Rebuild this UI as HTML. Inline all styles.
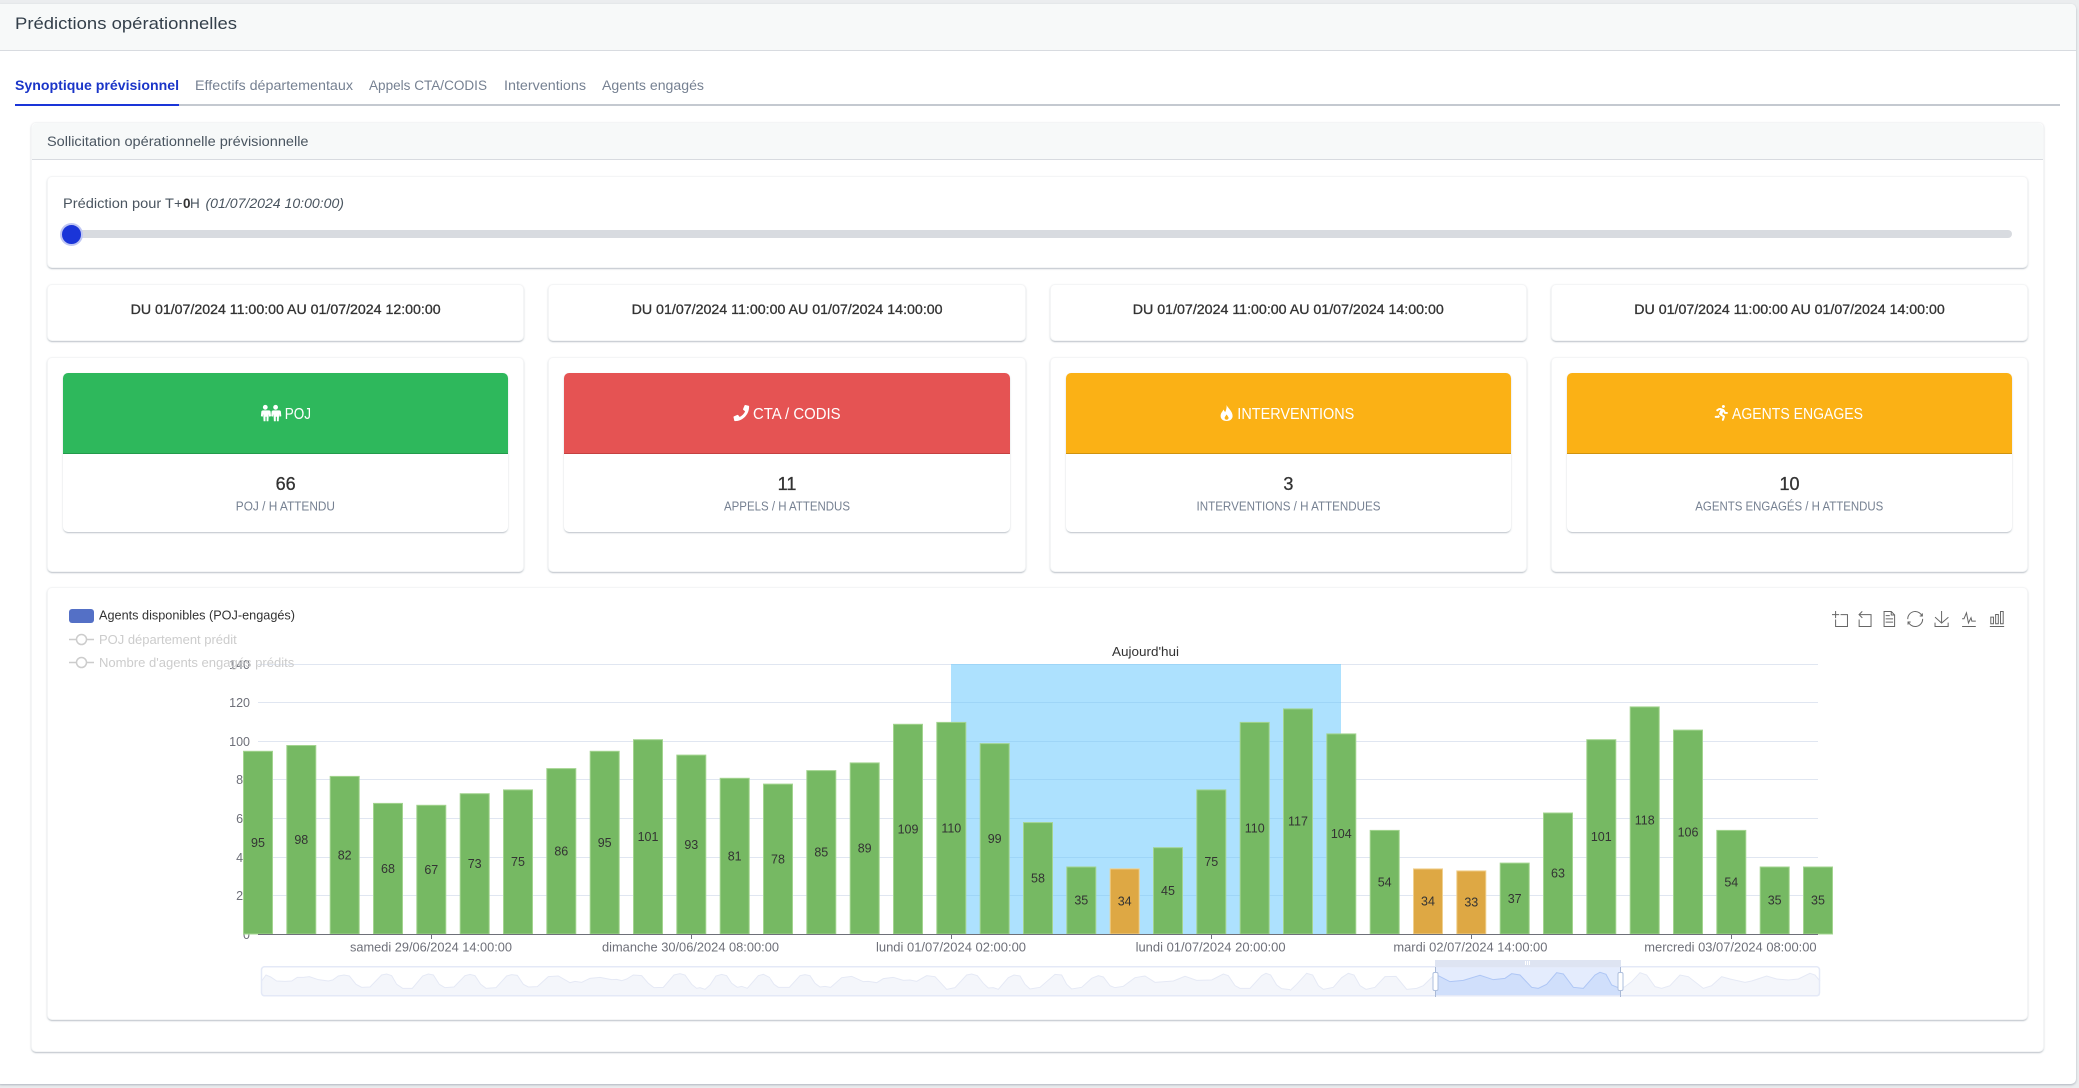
<!DOCTYPE html>
<html lang="fr">
<head>
<meta charset="utf-8">
<title>Prédictions opérationnelles</title>
<style>
html,body{margin:0;padding:0;background:#ebedef;width:2079px;height:1088px;overflow:hidden}
.b{position:absolute;box-sizing:border-box}
.c{background:#fff;border:1px solid #f4f5f6;border-radius:5px;box-shadow:0 1px 1px 0 rgba(60,75,100,.12),0 2px 1px -1px rgba(60,75,100,.1),0 1px 2px 0 rgba(60,75,100,.14)}
svg{position:absolute;left:0;top:0}
text{font-family:"Liberation Sans",sans-serif}
.m{stroke:currentColor;stroke-width:.3}
.ax{font-size:12.5px;fill:#6e7079}
.v{font-size:12.5px;fill:#333;text-anchor:middle}
.g{stroke:#e0e6f1;stroke-width:1}
.gb rect{fill:#76b963;stroke:#a3d48f;stroke-width:1}
.gb rect.o{fill:#dea844;stroke:#f0d08f}
.t path{fill:none;stroke:#666;stroke-width:1;vector-effect:non-scaling-stroke}
.sl{fill:none;stroke:#e5e9f5;stroke-width:1;vector-effect:non-scaling-stroke}
</style>
</head>
<body>
<div class="b" style="left:-4px;top:4px;width:2080px;height:1080px;background:#fff;border-radius:5px;box-shadow:0 1px 2px rgba(60,75,100,.35)"></div>
<div class="b" style="left:-4px;top:4px;width:2080px;height:47px;background:#f7f9f9;border-bottom:1px solid #d8dbe0;border-radius:5px 5px 0 0"></div>
<div class="b" style="left:15px;top:104px;width:2045px;height:2px;background:#c4c9d0"></div>
<div class="b" style="left:15px;top:104px;width:164px;height:2px;background:#1a35d8"></div>

<div class="b c" style="left:31px;top:122px;width:2013px;height:930px"></div>
<div class="b" style="left:32px;top:123px;width:2011px;height:37px;background:#f7f9f9;border-bottom:1px solid #d8dbe0;border-radius:5px 5px 0 0"></div>

<div class="b c" style="left:47px;top:176px;width:1981px;height:92px"></div>
<div class="b" style="left:65px;top:230px;width:1947px;height:8px;background:#d8dbe0;border-radius:4px"></div>
<div class="b" style="left:60px;top:223px;width:23px;height:23px;border-radius:50%;background:#1a35d8;border:2.5px solid #bfc6f3"></div>

<div class="b c" style="left:47px;top:284px;width:477px;height:57px"></div>
<div class="b c" style="left:548px;top:284px;width:478px;height:57px"></div>
<div class="b c" style="left:1050px;top:284px;width:477px;height:57px"></div>
<div class="b c" style="left:1551px;top:284px;width:477px;height:57px"></div>

<div class="b c" style="left:47px;top:357px;width:477px;height:215px"></div>
<div class="b c" style="left:548px;top:357px;width:478px;height:215px"></div>
<div class="b c" style="left:1050px;top:357px;width:477px;height:215px"></div>
<div class="b c" style="left:1551px;top:357px;width:477px;height:215px"></div>

<div class="b c" style="left:63px;top:373px;width:445px;height:159px;border:0"></div>
<div class="b c" style="left:564px;top:373px;width:446px;height:159px;border:0"></div>
<div class="b c" style="left:1066px;top:373px;width:445px;height:159px;border:0"></div>
<div class="b c" style="left:1567px;top:373px;width:445px;height:159px;border:0"></div>

<div class="b" style="left:63px;top:373px;width:445px;height:81px;background:#2eb85c;border-bottom:1.5px solid #239a4b;border-radius:5px 5px 0 0"></div>
<div class="b" style="left:564px;top:373px;width:446px;height:81px;background:#e55353;border-bottom:1.5px solid #c44141;border-radius:5px 5px 0 0"></div>
<div class="b" style="left:1066px;top:373px;width:445px;height:81px;background:#fbb115;border-bottom:1.5px solid #cf930f;border-radius:5px 5px 0 0"></div>
<div class="b" style="left:1567px;top:373px;width:445px;height:81px;background:#fbb115;border-bottom:1.5px solid #cf930f;border-radius:5px 5px 0 0"></div>

<div class="b c" style="left:47px;top:587px;width:1981px;height:433px"></div>

<svg width="2079" height="1088" viewBox="0 0 2079 1088" xmlns="http://www.w3.org/2000/svg">
<!-- header texts -->
<text x="15" y="29" font-size="16.5" fill="#333f4a" textLength="222" lengthAdjust="spacingAndGlyphs">Prédictions opérationnelles</text>
<text x="15" y="90" font-size="13.5" font-weight="700" fill="#1a35c8" textLength="164" lengthAdjust="spacingAndGlyphs">Synoptique prévisionnel</text>
<text x="195" y="90" font-size="13.5" fill="#768192" textLength="158" lengthAdjust="spacingAndGlyphs">Effectifs départementaux</text>
<text x="369" y="90" font-size="13.5" fill="#768192" textLength="118" lengthAdjust="spacingAndGlyphs">Appels CTA/CODIS</text>
<text x="504" y="90" font-size="13.5" fill="#768192" textLength="82" lengthAdjust="spacingAndGlyphs">Interventions</text>
<text x="602" y="90" font-size="13.5" fill="#768192" textLength="102" lengthAdjust="spacingAndGlyphs">Agents engagés</text>
<text x="47" y="146" font-size="13.5" fill="#4a5560" textLength="261.5" lengthAdjust="spacingAndGlyphs">Sollicitation opérationnelle prévisionnelle</text>
<text x="63" y="208" font-size="13.5" fill="#4a5560" textLength="119.5" lengthAdjust="spacingAndGlyphs">Prédiction pour T+</text>
<text x="183" y="208" font-size="13.5" font-weight="700" fill="#333">0</text>
<text x="190" y="208" font-size="13.5" fill="#4a5560">H</text>
<text x="205.5" y="208" font-size="13.5" font-style="italic" fill="#4a5560" textLength="138.5" lengthAdjust="spacingAndGlyphs">(01/07/2024 10:00:00)</text>

<!-- date labels -->
<g font-size="13.5" fill="#333" color="#333">
<text class="m" x="130.6" y="314" textLength="310" lengthAdjust="spacingAndGlyphs">DU 01/07/2024 11:00:00 AU 01/07/2024 12:00:00</text>
<text class="m" x="631.6" y="314" textLength="311" lengthAdjust="spacingAndGlyphs">DU 01/07/2024 11:00:00 AU 01/07/2024 14:00:00</text>
<text class="m" x="1132.8" y="314" textLength="311" lengthAdjust="spacingAndGlyphs">DU 01/07/2024 11:00:00 AU 01/07/2024 14:00:00</text>
<text class="m" x="1634.3" y="314" textLength="310.5" lengthAdjust="spacingAndGlyphs">DU 01/07/2024 11:00:00 AU 01/07/2024 14:00:00</text>
</g>

<!-- KPI headers -->
<g font-size="15.5" fill="#fff">
<text x="284.7" y="419" textLength="26.3" lengthAdjust="spacingAndGlyphs">POJ</text>
<text x="753" y="419" textLength="87.6" lengthAdjust="spacingAndGlyphs">CTA / CODIS</text>
<text x="1237.3" y="419" textLength="117" lengthAdjust="spacingAndGlyphs">INTERVENTIONS</text>
<text x="1732" y="419" textLength="131" lengthAdjust="spacingAndGlyphs">AGENTS ENGAGES</text>
</g>
<g fill="#fff">
<circle cx="265.3" cy="407.3" r="2.4"/>
<path d="M261.6 410.4h7.4q1.4 0 1.6 1.4l.4 4.4-1.9.4-.3-2.6-.4 7.2h-1.8v-4.4h-1.1v4.4h-1.9l-.4-7.2-.4 2.6-1.9-.4.4-4.4q.2-1.4 1.9-1.4z"/>
<circle cx="275.6" cy="407.3" r="2.4"/>
<path d="M271.9 410.4h7.4q1.4 0 1.6 1.4l.4 4.4-1.9.4-.3-2.6-.4 7.2h-1.8v-4.4h-1.1v4.4h-1.9l-.4-7.2-.4 2.6-1.9-.4.4-4.4q.2-1.4 1.9-1.4z"/>
<path transform="translate(733.5,405) scale(.0305,.0315)" d="M493.4 24.6l-104-24c-11.3-2.6-22.9 3.3-27.5 13.9l-48 112c-4.2 9.8-1.4 21.3 6.9 28l60.6 49.6c-36 76.7-98.9 140.5-177.2 177.2l-49.6-60.6c-6.8-8.3-18.2-11.1-28-6.9l-112 48C3.9 366.5-2 378.1.6 389.4l24 104C27.1 504.2 36.7 512 48 512c256.1 0 464-207.5 464-464 0-11.2-7.7-20.9-18.6-23.4z"/>
<path transform="translate(1220.6,405)" fill-rule="evenodd" d="M6 0C7 3 12 6 12 11C12 14 9.5 16 6 16C2.5 16 0 14 0 11C0 8 2 6.5 3 4.5C3.5 6 4 6.5 4.7 7C5.5 5 6.2 3 6 0ZM6 9.5C5 11 4 12 4 13C4 14 5 14.7 6 14.7C7 14.7 8 14 8 13C8 12 7 11 6 9.5Z"/>
<path transform="translate(1714.7,405) scale(.032,.031)" d="M272 96c26.51 0 48-21.49 48-48S298.51 0 272 0s-48 21.49-48 48 21.49 48 48 48zM113.69 317.47l-14.8 34.52H32c-17.67 0-32 14.33-32 32s14.33 32 32 32h77.45c19.25 0 36.58-11.44 44.11-29.09l8.79-20.52-10.67-6.3c-17.32-10.23-30.06-25.37-37.99-42.61zM384 223.99h-44.03l-26.06-53.25c-12.5-25.55-35.45-44.23-61.78-50.94l-71.08-21.14c-28.3-6.8-57.77-.55-80.84 17.14l-39.67 30.41c-14.03 10.75-16.69 30.83-5.92 44.86s30.84 16.66 44.86 5.92l39.69-30.41c7.67-5.89 17.44-8 25.27-6.14l14.7 4.37-37.46 87.39c-12.62 29.48-1.31 64.01 26.3 80.31l84.98 50.17-27.47 87.73c-5.28 16.86 4.11 34.81 20.97 40.09 3.19 1 6.41 1.48 9.58 1.48 13.61 0 26.23-8.77 30.52-22.45l31.64-101.06c5.91-20.77-2.89-43.08-21.64-54.39l-61.24-36.14 31.31-78.28 20.27 41.43c8 16.34 24.92 26.89 43.11 26.89H384c17.67 0 32-14.33 32-32s-14.33-31.99-32-31.99z"/>
</g>

<!-- KPI values -->
<g font-size="18" fill="#333" color="#333" text-anchor="middle">
<text class="m" x="285.7" y="490">66</text>
<text class="m" x="787" y="490">11</text>
<text class="m" x="1288.4" y="490">3</text>
<text class="m" x="1789.5" y="490">10</text>
</g>
<g font-size="12.5" fill="#768192">
<text x="235.8" y="510.7" textLength="99.2" lengthAdjust="spacingAndGlyphs">POJ / H ATTENDU</text>
<text x="724" y="510.7" textLength="126" lengthAdjust="spacingAndGlyphs">APPELS / H ATTENDUS</text>
<text x="1196.5" y="510.7" textLength="184" lengthAdjust="spacingAndGlyphs">INTERVENTIONS / H ATTENDUES</text>
<text x="1695.3" y="510.7" textLength="188" lengthAdjust="spacingAndGlyphs">AGENTS ENGAGÉS / H ATTENDUS</text>
</g>

<!-- grid -->
<g class="g">
<line x1="258" x2="1818" y1="664.5" y2="664.5"/>
<line x1="258" x2="1818" y1="702.5" y2="702.5"/>
<line x1="258" x2="1818" y1="741.5" y2="741.5"/>
<line x1="258" x2="1818" y1="779.5" y2="779.5"/>
<line x1="258" x2="1818" y1="818.5" y2="818.5"/>
<line x1="258" x2="1818" y1="857.5" y2="857.5"/>
<line x1="258" x2="1818" y1="895.5" y2="895.5"/>
</g>
<!-- y axis labels -->
<g class="ax" text-anchor="end">
<text x="250" y="669">140</text>
<text x="250" y="707">120</text>
<text x="250" y="746">100</text>
<text x="250" y="784">80</text>
<text x="250" y="823">60</text>
<text x="250" y="862">40</text>
<text x="250" y="900">20</text>
<text x="250" y="939">0</text>
</g>

<!-- mark area -->
<rect x="951" y="664" width="390" height="270" fill="#5bc3fd" fill-opacity=".5"/>
<text x="1112" y="656" font-size="12.5" fill="#333" textLength="67" lengthAdjust="spacingAndGlyphs">Aujourd'hui</text>

<!-- bars -->
<g class="gb">
<rect x="243.5" y="751.3" width="29" height="182.7"/>
<rect x="286.8" y="745.5" width="29" height="188.5"/>
<rect x="330.2" y="776.4" width="29" height="157.6"/>
<rect x="373.5" y="803.4" width="29" height="130.6"/>
<rect x="416.8" y="805.3" width="29" height="128.7"/>
<rect x="460.2" y="793.7" width="29" height="140.3"/>
<rect x="503.5" y="789.9" width="29" height="144.1"/>
<rect x="546.8" y="768.6" width="29" height="165.4"/>
<rect x="590.2" y="751.3" width="29" height="182.7"/>
<rect x="633.5" y="739.7" width="29" height="194.3"/>
<rect x="676.8" y="755.1" width="29" height="178.9"/>
<rect x="720.2" y="778.3" width="29" height="155.7"/>
<rect x="763.5" y="784.1" width="29" height="149.9"/>
<rect x="806.8" y="770.6" width="29" height="163.4"/>
<rect x="850.2" y="762.9" width="29" height="171.1"/>
<rect x="893.5" y="724.3" width="29" height="209.7"/>
<rect x="936.8" y="722.4" width="29" height="211.6"/>
<rect x="980.2" y="743.6" width="29" height="190.4"/>
<rect x="1023.5" y="822.6" width="29" height="111.4"/>
<rect x="1066.8" y="867" width="29" height="67"/>
<rect class="o" x="1110.2" y="868.9" width="29" height="65.1"/>
<rect x="1153.5" y="847.7" width="29" height="86.3"/>
<rect x="1196.8" y="789.9" width="29" height="144.1"/>
<rect x="1240.2" y="722.4" width="29" height="211.6"/>
<rect x="1283.5" y="708.9" width="29" height="225.1"/>
<rect x="1326.8" y="733.9" width="29" height="200.1"/>
<rect x="1370.2" y="830.4" width="29" height="103.6"/>
<rect class="o" x="1413.5" y="868.9" width="29" height="65.1"/>
<rect class="o" x="1456.8" y="870.9" width="29" height="63.1"/>
<rect x="1500.2" y="863.1" width="29" height="70.9"/>
<rect x="1543.5" y="813" width="29" height="121"/>
<rect x="1586.8" y="739.7" width="29" height="194.3"/>
<rect x="1630.2" y="706.9" width="29" height="227.1"/>
<rect x="1673.5" y="730.1" width="29" height="203.9"/>
<rect x="1716.8" y="830.4" width="29" height="103.6"/>
<rect x="1760.2" y="867" width="29" height="67"/>
<rect x="1803.5" y="867" width="29" height="67"/>
</g>
<!-- bar labels -->
<g class="v">
<text x="258" y="846.9">95</text>
<text x="301.3" y="844">98</text>
<text x="344.7" y="859.4">82</text>
<text x="388" y="872.9">68</text>
<text x="431.3" y="873.9">67</text>
<text x="474.7" y="868.1">73</text>
<text x="518" y="866.2">75</text>
<text x="561.3" y="855.6">86</text>
<text x="604.7" y="846.9">95</text>
<text x="648" y="841.1">101</text>
<text x="691.3" y="848.8">93</text>
<text x="734.7" y="860.4">81</text>
<text x="778" y="863.3">78</text>
<text x="821.3" y="856.5">85</text>
<text x="864.7" y="852.7">89</text>
<text x="908" y="833.4">109</text>
<text x="951.3" y="832.5">110</text>
<text x="994.7" y="843">99</text>
<text x="1038" y="882.5">58</text>
<text x="1081.3" y="904.7">35</text>
<text x="1124.7" y="905.7">34</text>
<text x="1168" y="895.1">45</text>
<text x="1211.3" y="866.2">75</text>
<text x="1254.7" y="832.5">110</text>
<text x="1298" y="825.7">117</text>
<text x="1341.3" y="838.2">104</text>
<text x="1384.7" y="886.5">54</text>
<text x="1428" y="905.7">34</text>
<text x="1471.3" y="906.7">33</text>
<text x="1514.7" y="902.8">37</text>
<text x="1558" y="877.7">63</text>
<text x="1601.3" y="841.1">101</text>
<text x="1644.7" y="824.7">118</text>
<text x="1688" y="836.3">106</text>
<text x="1731.3" y="886.5">54</text>
<text x="1774.7" y="904.7">35</text>
<text x="1818" y="904.7">35</text>
</g>

<!-- x axis -->
<g stroke="#6e7079" stroke-width="1">
<line x1="258" x2="1818" y1="934.5" y2="934.5"/>
<line x1="431.5" x2="431.5" y1="934" y2="939"/>
<line x1="691.5" x2="691.5" y1="934" y2="939"/>
<line x1="951.5" x2="951.5" y1="934" y2="939"/>
<line x1="1211.5" x2="1211.5" y1="934" y2="939"/>
<line x1="1471.5" x2="1471.5" y1="934" y2="939"/>
<line x1="1731.5" x2="1731.5" y1="934" y2="939"/>
</g>
<g class="ax">
<text x="350" y="951.5" textLength="162" lengthAdjust="spacingAndGlyphs">samedi 29/06/2024 14:00:00</text>
<text x="602" y="951.5" textLength="177" lengthAdjust="spacingAndGlyphs">dimanche 30/06/2024 08:00:00</text>
<text x="876" y="951.5" textLength="150" lengthAdjust="spacingAndGlyphs">lundi 01/07/2024 02:00:00</text>
<text x="1135.6" y="951.5" textLength="150" lengthAdjust="spacingAndGlyphs">lundi 01/07/2024 20:00:00</text>
<text x="1393.4" y="951.5" textLength="154" lengthAdjust="spacingAndGlyphs">mardi 02/07/2024 14:00:00</text>
<text x="1644.3" y="951.5" textLength="172.3" lengthAdjust="spacingAndGlyphs">mercredi 03/07/2024 08:00:00</text>
</g>

<!-- legend -->
<rect x="69" y="609" width="25" height="14" rx="3" fill="#5470c6"/>
<text x="99" y="619.5" font-size="12.5" fill="#333" textLength="196" lengthAdjust="spacingAndGlyphs">Agents disponibles (POJ-engagés)</text>
<g fill="#fff" stroke="#ccc" stroke-width="1.5">
<line x1="69" x2="94" y1="639.5" y2="639.5"/>
<circle cx="81.5" cy="639.5" r="5"/>
<line x1="69" x2="94" y1="662.5" y2="662.5"/>
<circle cx="81.5" cy="662.5" r="5"/>
</g>
<g font-size="12.5" fill="#ccc">
<text x="99" y="644" textLength="137.7" lengthAdjust="spacingAndGlyphs">POJ département prédit</text>
<text x="99" y="667" textLength="195.3" lengthAdjust="spacingAndGlyphs">Nombre d'agents engagés prédits</text>
</g>

<!-- toolbox -->
<g class="t">
<path transform="translate(1832,611) scale(.2667)" d="M0,13.5h26.9 M13.5,26.9V0 M32.1,13.5H58V58H13.5 V32.1"/>
<path transform="translate(1856.4,611) scale(.2667)" d="M22,1.4L9.9,13.5l12.3,12.3 M10.3,13.5H54.9v44.6 H10.3v-26"/>
<path transform="translate(1881,611) scale(.2667)" d="M17.5,17.3H33 M17.5,17.3H33 M45.4,29.5h-28 M11.5,2v56H51V14.8L38.4,2H11.5z M38.4,2.2v12.7H51 M45.4,41.7h-28"/>
<path transform="translate(1907.2,611) scale(.2667)" d="M3.8,33.4 M47,18.9h9.8V8.7 M56.3,20.1 C52.1,9,40.5,0.6,26.8,2.1C12.6,3.7,1.6,16.2,2.1,30.6 M13,41.1H3.1v10.2 M3.7,39.9c4.2,11.1,15.8,19.5,29.5,18 c14.2-1.6,25.2-14.1,24.7-28.5"/>
<path transform="translate(1933.8,611) scale(.2667)" d="M4.7,22.9L29.3,45.5L54.7,23.4M4.6,43.6L4.6,58L53.8,58L53.8,43.6M29.2,45.1L29.2,0"/>
<path transform="translate(1961,611) scale(.2667)" d="M4.1,28.9h7.1l9.3-22l7.4,38l9.7-19.7l3,12.8h14.9M4.1,58h51.4"/>
<path transform="translate(1989,611) scale(.2667)" d="M6.7,22.9h10V48h-10V22.9zM24.9,13h10v35h-10V13zM43.2,2h10v46h-10V2zM3.1,58h53.7"/>
</g>

<!-- data zoom slider -->
<g transform="translate(250,955) scale(.33333)">
<polygon fill="#f4f6fb" points="35,122 35,78 48,60 62,66 80,78 105,79 125,78 142,67 160,67 178,65 205,74 235,78 248,75 265,63 282,60 298,63 318,88 335,97 360,96 395,60 410,57 425,62 440,88 458,100 487,100 518,63 535,57 550,60 568,88 585,98 612,96 645,62 660,58 675,62 692,88 708,100 738,98 770,63 785,59 802,61 820,88 835,96 862,95 895,65 925,63 960,83 975,79 995,82 1020,70 1050,67 1085,74 1100,73 1115,77 1130,72 1150,60 1175,62 1195,85 1212,98 1240,97 1272,60 1290,56 1305,60 1325,88 1340,100 1350,98 1365,103 1380,90 1398,63 1415,58 1430,62 1445,85 1462,97 1475,94 1492,100 1525,62 1540,58 1560,68 1560,122"/>
<polyline class="sl" points="35,78 48,60 62,66 80,78 105,79 125,78 142,67 160,67 178,65 205,74 235,78 248,75 265,63 282,60 298,63 318,88 335,97 360,96 395,60 410,57 425,62 440,88 458,100 487,100 518,63 535,57 550,60 568,88 585,98 612,96 645,62 660,58 675,62 692,88 708,100 738,98 770,63 785,59 802,61 820,88 835,96 862,95 895,65 925,63 960,83 975,79 995,82 1020,70 1050,67 1085,74 1100,73 1115,77 1130,72 1150,60 1175,62 1195,85 1212,98 1240,97 1272,60 1290,56 1305,60 1325,88 1340,100 1350,98 1365,103 1380,90 1398,63 1415,58 1430,62 1445,85 1462,97 1475,94 1492,100 1525,62 1540,58 1560,68"/>
</g>
<g transform="translate(770,955) scale(.33333)">
<polygon fill="#f4f6fb" points="0,122 0,70 12,88 25,97 58,97 90,62 105,59 120,62 135,85 150,96 165,94 182,97 215,68 245,64 280,80 295,79 320,83 340,71 370,67 400,76 420,75 440,79 470,62 495,65 530,103 555,98 590,60 605,57 622,62 640,85 655,99 670,98 685,103 715,68 732,60 750,63 765,88 780,102 810,97 855,58 875,60 890,88 905,102 935,97 965,70 985,62 1000,66 1020,92 1035,98 1060,94 1095,68 1125,63 1155,82 1210,78 1245,64 1280,76 1325,75 1360,57 1375,62 1395,92 1410,100 1440,100 1475,62 1488,55 1502,60 1520,90 1535,101 1560,104 1560,122"/>
<polyline class="sl" points="0,70 12,88 25,97 58,97 90,62 105,59 120,62 135,85 150,96 165,94 182,97 215,68 245,64 280,80 295,79 320,83 340,71 370,67 400,76 420,75 440,79 470,62 495,65 530,103 555,98 590,60 605,57 622,62 640,85 655,99 670,98 685,103 715,68 732,60 750,63 765,88 780,102 810,97 855,58 875,60 890,88 905,102 935,97 965,70 985,62 1000,66 1020,92 1035,98 1060,94 1095,68 1125,63 1155,82 1210,78 1245,64 1280,76 1325,75 1360,57 1375,62 1395,92 1410,100 1440,100 1475,62 1488,55 1502,60 1520,90 1535,101 1560,104"/>
</g>
<g transform="translate(1290,955) scale(.33333)">
<polygon fill="#f4f6fb" points="0,122 0,107 20,88 50,55 68,60 85,92 100,103 130,97 155,68 175,55 192,60 210,92 228,103 255,97 285,65 318,64 350,103 380,100 400,92 430,63 445,62 992,100 1005,95 1025,80 1050,53 1070,60 1095,95 1115,100 1140,92 1170,60 1195,65 1240,100 1265,92 1295,65 1320,72 1365,82 1385,78 1430,63 1460,72 1495,75 1525,72 1560,55 1575,60 1590,78 1590,122"/>
<polyline class="sl" points="0,107 20,88 50,55 68,60 85,92 100,103 130,97 155,68 175,55 192,60 210,92 228,103 255,97 285,65 318,64 350,103 380,100 400,92 430,63"/>
<polyline class="sl" points="992,100 1005,95 1025,80 1050,53 1070,60 1095,95 1115,100 1140,92 1170,60 1195,65 1240,100 1265,92 1295,65 1320,72 1365,82 1385,78 1430,63 1460,72 1495,75 1525,72 1560,55 1575,60 1590,78"/>
<rect x="436" y="36" width="556" height="88" fill="#e4ecfd"/>
<polygon fill="#d0dffb" points="436,124 436,58 445,62 480,80 520,76 570,61 610,74 645,70 665,56 690,60 725,97 745,100 770,88 800,53 820,57 850,97 880,100 915,60 930,52 948,58 965,90 992,101 992,124"/>
<polyline fill="none" stroke="#aec6f5" stroke-width="1" vector-effect="non-scaling-stroke" points="436,58 445,62 480,80 520,76 570,61 610,74 645,70 665,56 690,60 725,97 745,100 770,88 800,53 820,57 850,97 880,100 915,60 930,52 948,58 965,90 992,101"/>
</g>
<rect x="261.5" y="966.8" width="1558" height="29" rx="3" fill="none" stroke="#e4e9f7" stroke-width="1.5"/>
<rect x="1435" y="960" width="186" height="7" fill="#dee4f2"/>
<rect x="1525" y="961" width="1" height="4" fill="#fff"/><rect x="1527" y="961" width="1" height="4" fill="#fff"/><rect x="1529" y="961" width="1" height="4" fill="#fff"/>
<line x1="1435.5" x2="1435.5" y1="967" y2="997" stroke="#a9b9d6"/>
<line x1="1620.5" x2="1620.5" y1="967" y2="997" stroke="#a9b9d6"/>
<rect x="1433" y="972.5" width="5" height="18" rx="1.5" fill="#fff" stroke="#aebfdd"/>
<rect x="1618" y="972.5" width="5" height="18" rx="1.5" fill="#fff" stroke="#aebfdd"/>
</svg>
</body>
</html>
